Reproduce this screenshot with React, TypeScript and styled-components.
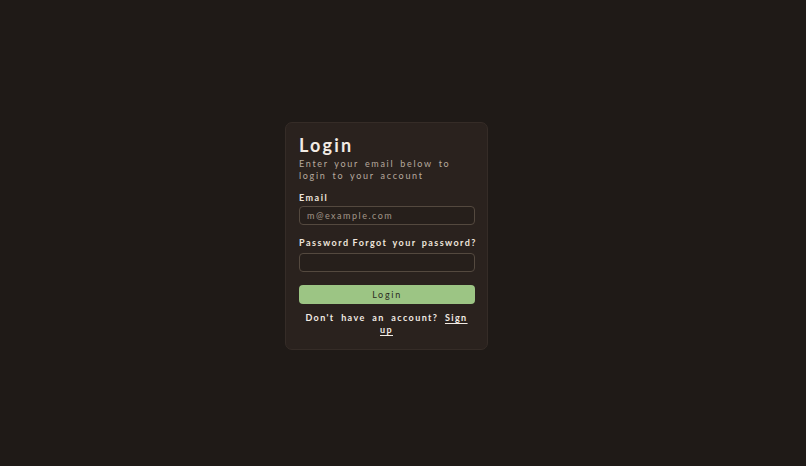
import React from "react";
import styled, { createGlobalStyle } from "styled-components";

const Global = createGlobalStyle`
  html, body { margin: 0; padding: 0; background: #1f1a17; }
  body { font-family: Lato, "Noto Sans", sans-serif; }
  * { box-sizing: border-box; }
`;

const Page = styled.div`
  width: 806px;
  height: 466px;
  display: flex;
  align-items: flex-start;
  justify-content: center;
  padding-top: 122px;
  padding-right: 33px;
`;

const Card = styled.div`
  width: 203px;
  background: #2a221e;
  border: 1px solid #352c27;
  border-radius: 7px;
  padding: 11px 13px 13px;
  display: flex;
  flex-direction: column;
  color: #efe6dd;
`;

const Title = styled.h1`
  margin: 0;
  font-size: 18px;
  font-weight: 700;
  letter-spacing: 2.2px;
  line-height: 22px;
  color: #f2ebe4;
`;

const Subtitle = styled.p`
  margin: 2px 0 0;
  font-size: 9px;
  line-height: 12px;
  letter-spacing: 1.7px;
  word-spacing: 2px;
  color: #b7aa9f;
  padding-right: 20px;
`;

const Field = styled.div<{ $top: number; $gap: number }>`
  margin-top: ${(p) => p.$top}px;
  display: flex;
  flex-direction: column;
  gap: ${(p) => p.$gap}px;
`;

const LabelRow = styled.div`
  display: flex;
  gap: 3px;
  white-space: nowrap;
`;

const Label = styled.label`
  font-size: 9px;
  font-weight: 700;
  letter-spacing: 1.5px;
  word-spacing: 2px;
  line-height: 12px;
  color: #efe6dd;
`;

const Link = styled.a`
  font-size: 9px;
  font-weight: 700;
  letter-spacing: 1.4px;
  word-spacing: 2px;
  line-height: 12px;
  color: #efe6dd;
  text-decoration: none;
`;

const Input = styled.input`
  width: 176px;
  height: 19px;
  border: 1px solid #54493f;
  border-radius: 4px;
  background: #261f1b;
  padding: 0 7px;
  font-family: inherit;
  font-size: 9px;
  letter-spacing: 1.5px;
  color: #efe6dd;
  outline: none;
  &::placeholder { color: #a39789; }
`;

const Button = styled.button`
  margin-top: 13px;
  width: 176px;
  height: 19px;
  border: none;
  border-radius: 4px;
  background: #9cc584;
  color: #2b2a22;
  font-family: inherit;
  font-size: 9px;
  letter-spacing: 1.7px;
  cursor: pointer;
`;

const Footer = styled.p`
  margin: 8px 0 0;
  text-align: center;
  font-size: 9px;
  font-weight: 700;
  letter-spacing: 1.4px;
  word-spacing: 3px;
  line-height: 12px;
  color: #f2ebe4;
  padding: 0 2px;
`;

const SignUp = styled.a`
  color: #f2ebe4;
  text-decoration: underline;
  text-underline-offset: 2px;
`;

export default function App() {
  return (
    <>
      <Global />
      <Page>
        <Card>
          <Title>Login</Title>
          <Subtitle>Enter your email below to login to your account</Subtitle>
          <Field $top={10} $gap={2}>
            <Label htmlFor="email">Email</Label>
            <Input id="email" type="email" placeholder="m@example.com" />
          </Field>
          <Field $top={12} $gap={4}>
            <LabelRow>
              <Label htmlFor="password">Password</Label>
              <Link href="#">Forgot your password?</Link>
            </LabelRow>
            <Input id="password" type="password" />
          </Field>
          <Button>Login</Button>
          <Footer>
            Don't have an account? <SignUp href="#">Sign up</SignUp>
          </Footer>
        </Card>
      </Page>
    </>
  );
}
